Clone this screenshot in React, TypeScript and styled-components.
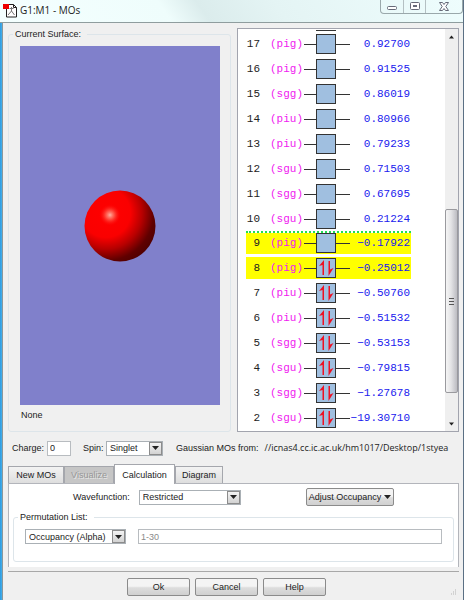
import React from "react";
import styled, { createGlobalStyle, css } from "styled-components";

const ui = '"Liberation Sans", Arial, sans-serif';

const GlobalStyle = createGlobalStyle`
  * { box-sizing: border-box; }
  body { margin: 0; font: 9px/12px ${ui}; color: #222; background: #f0f0f0; }
  button, input, select { font: inherit; color: inherit; margin: 0; }
`;

const Window = styled.div`
  position: relative;
  display: flex;
  flex-direction: column;
  height: 100vh;
  min-height: 480px;
  border-right: 1px solid #5b7084;
  background: linear-gradient(90deg, #2c9be0 0, #46aeea 2px, #8a979c 2px, #8a979c 3px, #f0f0f0 3px);
`;

const TitleBar = styled.header`
  flex: none;
  height: 23px;
  display: flex;
  align-items: flex-start;
  padding: 3px 0 0 3px;
  border-bottom: 1px solid #8f9d9e;
  background: linear-gradient(55deg, #f4ffff 0, #effdfc 36%, #dbecec 44%, #e4f4f4 60%, #eefdfd 100%);
`;

const Title = styled.h1`
  flex: 1;
  margin: 0 0 0 3px;
  font: 10px/14px "Open Sans", "Noto Sans", sans-serif;
  color: #222;
`;

const Controls = styled.div`
  display: flex;
  height: 14px;
  margin-top: -3px;
  border: 1px solid #9aa8ab;
  border-top: 0;
  border-radius: 0 0 4px 4px;
  overflow: hidden;
`;

const ControlButton = styled.button<{ $wide?: boolean }>`
  display: flex;
  align-items: center;
  justify-content: center;
  width: ${(p) => (p.$wide ? 37 : 22)}px;
  padding: 0;
  border: 0;
  background: transparent;
  & + & { border-left: 1px solid #b4c0c3; }
`;

const Body = styled.main`
  flex: 1;
  min-height: 0;
  margin-left: 3px;
  display: flex;
  flex-direction: column;
  padding: 5px 4px 4px 5px;
  background: #f0f0f0;
`;

const Top = styled.div`
  flex: 1;
  min-height: 0;
  display: flex;
  gap: 6px;
`;

const Group = styled.fieldset<{ $fill?: boolean }>`
  display: flex;
  min-width: 0;
  margin: 0;
  padding: 0 11px;
  border: 1px solid #dde5ea;
  border-radius: 3px;
  ${(p) => p.$fill && css`flex: 1; flex-direction: column; padding: 6px 10px 0 11px;`}
`;

const Legend = styled.legend`
  margin-left: -7px;
  padding: 0 6px 0 2px;
`;

const Surface = styled.div`
  flex: 1;
  display: flex;
  align-items: center;
  justify-content: center;
  background: #8080cb;
`;

const SurfaceName = styled.p`
  margin: 0;
  padding: 4px 0 10px 1px;
`;

const ListFrame = styled.section`
  flex: none;
  width: 222px;
  display: flex;
  border: 1px solid #a2a4ae;
  background: #fff;
`;

const Table = styled.table`
  flex: 1;
  display: flex;
  flex-direction: column;
  padding: 1px 34px 1px 8px;
  font: 11px/14px "Liberation Mono", monospace;
`;

const Rows = styled.tbody`
  flex: 1;
  display: flex;
  flex-direction: column;
`;

const PreviousBox = styled.caption`
  display: block;
  width: 20px;
  height: 1px;
  margin-left: 70px;
  background: #333;
`;

const Orbital = styled.tr<{ $selected?: boolean; $boundary?: boolean }>`
  flex: 1;
  min-height: 0;
  display: flex;
  align-items: center;
  border-top: 2px ${(p) => (p.$boundary ? "dotted #22dd55" : "solid #fff")};
  border-bottom: 1px solid #fff;
  background: ${(p) => (p.$selected ? "#ffff00" : "#fff")};
  background-clip: padding-box;
`;

const Index = styled.td`
  width: 14px;
  padding: 0;
  text-align: right;
  color: #222;
`;

const Symmetry = styled.td`
  width: 34px;
  margin-left: 10px;
  padding: 0;
  color: #f020f0;
`;

const Level = styled.td`
  width: 46px;
  height: 20px;
  padding: 0;
`;

const Energy = styled.td`
  flex: 1;
  padding: 0 1px 0 0;
  display: flex;
  justify-content: flex-end;
  white-space: nowrap;
  color: #2020ee;
`;

const ScrollBar = styled.div`
  width: 13px;
  display: flex;
  flex-direction: column;
  background: #efefef;
`;

const ScrollButton = styled.button`
  height: 15px;
  padding: 0;
  border: 0;
  display: flex;
  align-items: center;
  justify-content: center;
  background: transparent;
`;

const Track = styled.div`
  flex: 1;
  display: flex;
  flex-direction: column;
  padding: 165px 0 23px;
`;

const Thumb = styled.div`
  flex: 1;
  display: flex;
  align-items: center;
  justify-content: center;
  border: 1px solid #9a9a9e;
  border-radius: 2px;
  background: linear-gradient(90deg, #f5f5f5, #e4e4e6 45%, #bcbcc2);
`;

const StateRow = styled.div`
  flex: none;
  display: flex;
  align-items: center;
  height: 32px;
  padding-left: 4px;
`;

const Label = styled.label`
  white-space: nowrap;
`;

const TextBox = styled.input<{ $grow?: boolean }>`
  height: 15px;
  min-width: 0;
  padding: 0 2px;
  border: 1px solid #b8bcc0;
  border-radius: 0;
  outline: 0;
  background: #fff;
  ${(p) => (p.$grow ? css`flex: 1; color: #8a8a8a;` : css`width: 24px; margin: 0 12px 0 3px;`)}
`;

const SelectWrap = styled.span<{ $width: number }>`
  width: ${(p) => p.$width}px;
  height: 15px;
  display: grid;
  border: 1px solid #aab0b5;
  background: #fff;
`;

const Select = styled.select`
  grid-area: 1 / 1;
  width: 100%;
  height: 13px;
  padding: 0 14px 0 3px;
  border: 0;
  outline: 0;
  appearance: none;
  background: transparent;
`;

const DropArrow = styled.span`
  grid-area: 1 / 1;
  justify-self: end;
  width: 13px;
  height: 13px;
  display: flex;
  align-items: center;
  justify-content: center;
  border: 1px solid #8c8c8c;
  background: linear-gradient(#f4f4f4, #d2d2d2);
  pointer-events: none;
`;

const Source = styled.span`
  flex: 1;
  display: flex;
  gap: 6px;
  min-width: 0;
  margin: 0 4px 0 13px;
  white-space: nowrap;
`;

const Path = styled.span`
  font-family: "Open Sans", "Noto Sans", sans-serif;
`;

const Tabs = styled.div`
  flex: none;
  display: flex;
  align-items: flex-end;
  height: 19px;
`;

const Tab = styled.button<{ $width: number; $active?: boolean }>`
  width: ${(p) => p.$width}px;
  height: ${(p) => (p.$active ? 20 : 17)}px;
  margin-bottom: ${(p) => (p.$active ? -1 : 0)}px;
  padding: 0;
  border: 1px solid #a5a7ad;
  border-bottom: 0;
  z-index: ${(p) => (p.$active ? 1 : 0)};
  background: ${(p) => (p.$active ? "#fff" : "linear-gradient(#f3f3f3, #dedede)")};
  &:disabled { background: #c6c6c6; color: #969696; text-shadow: 1px 1px #e6e6e6; }
`;

const Panel = styled.section`
  flex: none;
  display: flex;
  flex-direction: column;
  height: 84px;
  padding: 4px 4px 5px;
  border: 1px solid #b3b5bb;
  border-bottom: 0;
  background: #fff;
`;

const WaveRow = styled.div`
  display: flex;
  align-items: center;
  gap: 9px;
  height: 18px;
  margin-bottom: 5px;
  padding: 0 60px;
`;

const Permutation = styled.div`
  flex: 1;
  display: flex;
  align-items: center;
  gap: 12px;
  height: 15px;
  margin: 6px 0 17px;
`;

const PushButton = styled.button<{ $width: number; $push?: boolean }>`
  width: ${(p) => p.$width}px;
  height: 18px;
  display: flex;
  align-items: center;
  justify-content: center;
  gap: 3px;
  padding: 0;
  margin-left: ${(p) => (p.$push ? "auto" : 0)};
  border: 1px solid #8b8b8b;
  border-radius: 2px;
  white-space: nowrap;
  background: linear-gradient(#f4f4f4 45%, #dddddd 55%, #d0d0d0);
  svg { flex: none; }
`;

const Footer = styled.footer`
  flex: none;
  display: flex;
  justify-content: center;
  gap: 5px;
  margin-top: 4px;
  padding: 6px 14px 0 0;
  border-top: 1px solid #a8a8a8;
`;

const Grip = styled.svg`
  position: absolute;
  right: 6px;
  bottom: 4px;
`;

const Arrow = ({ up, size = 7 }: { up?: boolean; size?: number }) => (
  <svg width={size} height="4" viewBox="0 0 7 4" aria-hidden="true">
    <path d={up ? "M0 4h7L3.500 0z" : "M0 0h7L3.500 4z"} fill="#222" />
  </svg>
);

const AppIcon = () => (
  <svg width="14" height="15" viewBox="0 0 14 15" aria-hidden="true">
    <path d="M3.500 1.500h7l3 3v9.500h-10z" fill="#fff" stroke="#222" />
    <path d="M10.500 1.500v3h3" fill="none" stroke="#222" />
    <path d="M8.500 4v4L5 12M8.500 8l3 4M6.500 5.500h4" fill="none" stroke="#777" />
    <rect x="0" y="1" width="6" height="5" fill="#e00" />
  </svg>
);

const Sphere = () => (
  <svg width="72" height="72" viewBox="0 0 72 72" role="img" aria-label="Atom">
    <defs>
      <radialGradient id="shade" gradientUnits="userSpaceOnUse" cx="22" cy="23" r="58">
        <stop offset="0" stopColor="#ff0000" />
        <stop offset=".42" stopColor="#fa0000" />
        <stop offset=".62" stopColor="#b80000" />
        <stop offset=".82" stopColor="#600000" />
        <stop offset="1" stopColor="#480000" />
      </radialGradient>
      <radialGradient id="gleam" gradientUnits="userSpaceOnUse" cx="26" cy="25" r="11">
        <stop offset="0" stopColor="#ffb0a0" />
        <stop offset=".4" stopColor="#ff6050" stopOpacity=".8" />
        <stop offset="1" stopColor="#ff0000" stopOpacity="0" />
      </radialGradient>
    </defs>
    <circle cx="36" cy="36" r="35.500" fill="url(#shade)" />
    <circle cx="26" cy="25" r="11" fill="url(#gleam)" />
  </svg>
);

const LevelDrawing = ({ filled }: { filled: boolean }) => (
  <svg width="46" height="20" viewBox="0 0 46 20" display="block" aria-hidden="true">
    <path d="M0 10.500h46" stroke="#333" />
    <rect x="12.500" y=".5" width="19" height="19" fill="#a0bfe0" stroke="#333" />
    {filled && (
      <g fill="#ee1122">
        <path d="M20 2v15h-1.500V7L15 8z" />
        <path d="M24.500 3H26v8.500l3.500-1.500-5 8z" />
      </g>
    )}
  </svg>
);

const orbitals: [number, string, string][] = [
  [17, "pig", "0.92700"],
  [16, "pig", "0.91525"],
  [15, "sgg", "0.86019"],
  [14, "piu", "0.80966"],
  [13, "piu", "0.79233"],
  [12, "sgu", "0.71503"],
  [11, "sgg", "0.67695"],
  [10, "sgu", "0.21224"],
  [9, "pig", "−0.17922"],
  [8, "pig", "−0.25012"],
  [7, "piu", "−0.50760"],
  [6, "piu", "−0.51532"],
  [5, "sgg", "−0.53153"],
  [4, "sgu", "−0.79815"],
  [3, "sgg", "−1.27678"],
  [2, "sgu", "−19.30710"],
];

const Picker = ({ id, value, width, label }: { id: string; value: string; width: number; label?: string }) => (
  <SelectWrap $width={width}>
    <Select id={id} aria-label={label} defaultValue={value}>
      <option>{value}</option>
    </Select>
    <DropArrow><Arrow /></DropArrow>
  </SelectWrap>
);

export default function App() {
  return (
    <>
      <GlobalStyle />
      <Window>
        <TitleBar>
          <AppIcon />
          <Title>G1:M1 - MOs</Title>
          <Controls>
            <ControlButton aria-label="Minimize">
              <svg width="11" height="10"><rect x=".5" y="4.500" width="9" height="3" rx="1" fill="#fff" stroke="#666a78" /></svg>
            </ControlButton>
            <ControlButton aria-label="Maximize">
              <svg width="10" height="9"><rect x=".5" y=".5" width="9" height="7" rx="1" fill="#fff" stroke="#666a78" /><rect x="3.500" y="3.500" width="3" height="1" fill="none" stroke="#666a78" /></svg>
            </ControlButton>
            <ControlButton $wide aria-label="Close">
              <svg width="10" height="9" viewBox="0 0 10 9"><path d="M.5.500h3L5 2.500 6.500.500h3L6.800 4.500l2.700 4h-3L5 6.500 3.500 8.500h-3l2.700-4z" fill="#fff" stroke="#666a78" /></svg>
            </ControlButton>
          </Controls>
        </TitleBar>
        <Body>
          <Top>
            <Group $fill>
              <Legend>Current Surface:</Legend>
              <Surface><Sphere /></Surface>
              <SurfaceName>None</SurfaceName>
            </Group>
            <ListFrame>
              <Table>
                <PreviousBox />
                <Rows>
                  {orbitals.map(([n, sym, energy]) => (
                    <Orbital key={n} $selected={n === 8 || n === 9} $boundary={n === 9}>
                      <Index>{n}</Index>
                      <Symmetry>({sym})</Symmetry>
                      <Level><LevelDrawing filled={n < 9} /></Level>
                      <Energy>{energy}</Energy>
                    </Orbital>
                  ))}
                </Rows>
              </Table>
              <ScrollBar>
                <ScrollButton aria-label="Scroll up"><Arrow up size={5} /></ScrollButton>
                <Track>
                  <Thumb>
                    <svg width="5" height="7" aria-hidden="true"><path d="M0 .5h5M0 3.500h5M0 6.500h5" stroke="#555" /></svg>
                  </Thumb>
                </Track>
                <ScrollButton aria-label="Scroll down"><Arrow size={5} /></ScrollButton>
              </ScrollBar>
            </ListFrame>
          </Top>
          <StateRow>
            <Label htmlFor="charge">Charge:</Label>
            <TextBox id="charge" defaultValue="0" />
            <Label htmlFor="spin">Spin:&nbsp;</Label>
            <Picker id="spin" value="Singlet" width={57} />
            <Source>
              <span>Gaussian MOs from:</span>
              <Path>//icnas4.cc.ic.ac.uk/hm1017/Desktop/1styea</Path>
            </Source>
          </StateRow>
          <Tabs role="tablist">
            <Tab role="tab" $width={56}>New MOs</Tab>
            <Tab role="tab" $width={50} disabled>Visualize</Tab>
            <Tab role="tab" $width={61} $active aria-selected="true">Calculation</Tab>
            <Tab role="tab" $width={48}>Diagram</Tab>
          </Tabs>
          <Panel>
            <WaveRow>
              <Label htmlFor="wave">Wavefunction:</Label>
              <Picker id="wave" value="Restricted" width={102} />
              <PushButton $width={88} $push>Adjust Occupancy <Arrow size={7} /></PushButton>
            </WaveRow>
            <Group>
              <Legend>Permutation List:</Legend>
              <Permutation>
                <Picker id="list" value="Occupancy (Alpha)" width={101} label="Permutation type" />
                <TextBox $grow aria-label="Permutation list" defaultValue="1-30" disabled />
              </Permutation>
            </Group>
          </Panel>
          <Footer>
            <PushButton $width={63}>Ok</PushButton>
            <PushButton $width={63}>Cancel</PushButton>
            <PushButton $width={63}>Help</PushButton>
          </Footer>
          <Grip width="7" height="7" aria-hidden="true">
            <path d="M5 1h1M3 3h1M5 3h1M1 5h1M3 5h1M5 5h1" stroke="#b5b5b5" />
          </Grip>
        </Body>
      </Window>
    </>
  );
}
